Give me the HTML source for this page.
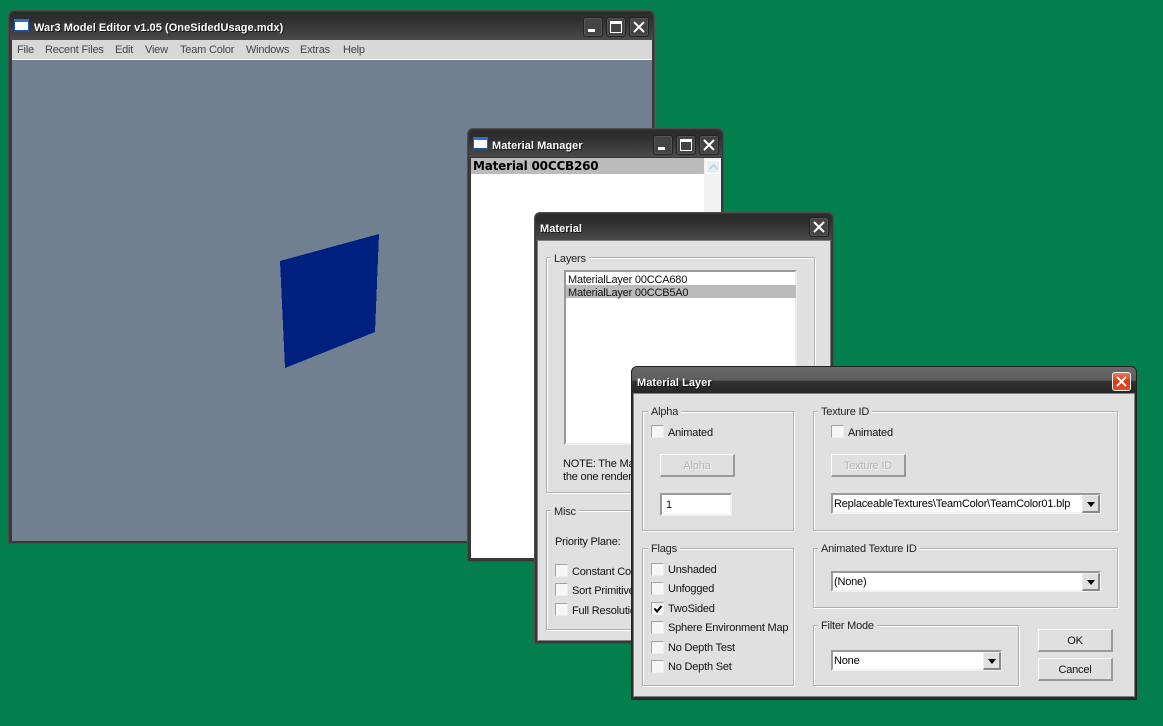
<!DOCTYPE html>
<html lang="en"><head><meta charset="utf-8"><title>War3 Model Editor</title>
<style>
html,body{margin:0;padding:0}
body{width:1163px;height:726px;background:#027f4c;overflow:hidden;position:relative;font-family:"Liberation Sans",sans-serif;font-size:11px;letter-spacing:-.2px;color:#111}
div,span,svg{position:absolute;box-sizing:border-box}
.t{white-space:nowrap;line-height:15px;height:15px}
.win{background:#383838;border:1px solid #4c4c4c;border-radius:6px 6px 0 0}
.tb{background:linear-gradient(#2a2a2a 0,#2e2e2e 25%,#4a4a4a 100%);border-radius:5px 5px 0 0}
.tl{color:#fff;font-weight:bold;font-size:11px;letter-spacing:.05px;white-space:nowrap;line-height:16px;text-shadow:1px 1px 0 #111}
.btn{width:20px;height:20px;background:#444;border:1px solid #222;border-radius:3px;box-shadow:inset 0 0 0 1px #555}
.client{background:#e0e0e0;box-shadow:0 0 0 1px #808080}
.grp{border:1px solid #b0b0b0;box-shadow:1px 1px 0 #fff,inset 1px 1px 0 #fff}
.lab{background:#e0e0e0;padding:0 3px;white-space:nowrap;line-height:15px;height:15px;color:#222}
.cb{width:13px;height:13px;background:#f6f6f6;border:1px solid #a4a4a4;border-right-color:#eee;border-bottom-color:#eee}
.b{background:#e0e0e0;border:1px solid #fff;border-right:2px solid #999;border-bottom:2px solid #999;text-align:center;line-height:22px;white-space:nowrap}
.dis{color:#b4b4b4;text-shadow:1px 1px 0 #f4f4f4}
.inp{background:#fff;border:2px solid #999;border-right-color:#f2f2f2;border-bottom-color:#f2f2f2;white-space:nowrap}
.dd{width:18px;background:#e0e0e0;border:1px solid #eee;border-right:2px solid #888;border-bottom:2px solid #888}
.dd:after{content:"";position:absolute;left:4px;top:6px;border-left:4.500px solid transparent;border-right:4.500px solid transparent;border-top:5px solid #000}
</style></head><body>

<!-- Main window -->
<div class="win" style="left:8px;top:10px;width:647px;height:534px"></div>
<div class="tb" style="left:10px;top:12px;width:643px;height:28px"></div>
<div style="left:14px;top:19px;width:15px;height:13px;background:#fff;border:1px solid #1d5fc0;border-top:3px solid #2a6fd8;border-bottom:2px solid #1b4f9f"></div>
<div class="tl" style="left:34px;top:20px">War3 Model Editor v1.05 (OneSidedUsage.mdx)</div>
<div class="btn" style="left:583px;top:17px"><span style="left:4px;top:11px;width:7px;height:3px;background:#fff"></span></div>
<div class="btn" style="left:606px;top:17px"><span style="left:3px;top:3px;width:12px;height:12px;border:1px solid #fff;border-top:3px solid #fff"></span></div>
<div class="btn" style="left:629px;top:17px"><svg style="left:3px;top:3px" width="12" height="12" viewBox="0 0 12 12"><path d="M1 1L11 11M11 1L1 11" stroke="#fff" stroke-width="2"/></svg></div>
<div style="left:12px;top:40px;width:640px;height:20px;background:#d8d8d8;border-bottom:1px solid #fff"></div>
<div class="t" style="left:17px;top:43px;color:#444">File</div>
<div class="t" style="left:45px;top:43px;color:#444">Recent Files</div>
<div class="t" style="left:115px;top:43px;color:#444">Edit</div>
<div class="t" style="left:145px;top:43px;color:#444">View</div>
<div class="t" style="left:180px;top:43px;color:#444">Team Color</div>
<div class="t" style="left:246px;top:43px;color:#444">Windows</div>
<div class="t" style="left:300px;top:43px;color:#444">Extras</div>
<div class="t" style="left:343px;top:43px;color:#444">Help</div>
<div style="left:12px;top:60px;width:640px;height:481px;background:#708090"></div>
<svg style="left:0;top:0" width="1163" height="726" shape-rendering="crispEdges"><polygon points="280,261 379,234 375,332 285,368" fill="#002080"/></svg>

<!-- Material Manager -->
<div class="win" style="left:467px;top:128px;width:257px;height:434px"></div>
<div class="tb" style="left:469px;top:130px;width:253px;height:27px"></div>
<div style="left:473px;top:137px;width:15px;height:13px;background:#fff;border:1px solid #1d5fc0;border-top:3px solid #2a6fd8;border-bottom:2px solid #1b4f9f"></div>
<div class="tl" style="left:492px;top:138px">Material Manager</div>
<div class="btn" style="left:653px;top:135px"><span style="left:4px;top:11px;width:7px;height:3px;background:#fff"></span></div>
<div class="btn" style="left:676px;top:135px"><span style="left:3px;top:3px;width:12px;height:12px;border:1px solid #fff;border-top:3px solid #fff"></span></div>
<div class="btn" style="left:699px;top:135px"><svg style="left:3px;top:3px" width="12" height="12" viewBox="0 0 12 12"><path d="M1 1L11 11M11 1L1 11" stroke="#fff" stroke-width="2"/></svg></div>
<div style="left:471px;top:158px;width:250px;height:400px;background:#fff"></div>
<div style="left:471px;top:158px;width:233px;height:16px;background:#bbb"></div>
<div class="t" style="left:473px;top:159px;font-family:'DejaVu Sans',sans-serif;font-weight:bold;font-size:12px;letter-spacing:-.2px;height:15px;line-height:15px;color:#000">Material 00CCB260</div>
<div style="left:704px;top:158px;width:17px;height:400px;background:#f2f2f2"></div>
<div style="left:706px;top:160px;width:14px;height:14px;background:#e8eef4;border:1px solid #fff"><svg style="left:2px;top:3px" width="9" height="6" viewBox="0 0 9 6"><path d="M0.5 5L4.5 1L8.500 5" stroke="#b8cfe4" stroke-width="1.600" fill="none"/></svg></div>

<!-- Material -->
<div class="win" style="left:534px;top:212px;width:300px;height:432px"></div>
<div class="tb" style="left:536px;top:214px;width:296px;height:27px"></div>
<div class="tl" style="left:540px;top:221px">Material</div>
<div class="btn" style="left:809px;top:217px"><svg style="left:3px;top:3px" width="12" height="12" viewBox="0 0 12 12"><path d="M1 1L11 11M11 1L1 11" stroke="#fff" stroke-width="2"/></svg></div>
<div class="client" style="left:538px;top:241px;width:292px;height:399px"></div>
<div class="grp" style="left:546px;top:257px;width:269px;height:236px"></div>
<div class="lab" style="left:551px;top:252px">Layers</div>
<div style="left:564px;top:270px;width:233px;height:175px;background:#fff;border:2px solid #999;border-right-color:#eee;border-bottom-color:#eee"></div>
<div class="t" style="left:568px;top:273px">MaterialLayer 00CCA680</div>
<div style="left:566px;top:285px;width:230px;height:13px;background:#bbb"></div>
<div class="t" style="left:568px;top:286px">MaterialLayer 00CCB5A0</div>
<div class="t" style="left:563px;top:457px">NOTE: The Material Layer at the bottom of the list is</div>
<div class="t" style="left:563px;top:470px">the one rendered on top of the others.</div>
<div class="grp" style="left:546px;top:510px;width:269px;height:120px"></div>
<div class="lab" style="left:551px;top:505px">Misc</div>
<div class="t" style="left:555px;top:535px">Priority Plane:</div>
<div class="cb" style="left:555px;top:564px"></div><div class="t" style="left:572px;top:565px">Constant Color</div>
<div class="cb" style="left:555px;top:583px"></div><div class="t" style="left:572px;top:584px">Sort Primitives</div>
<div class="cb" style="left:555px;top:603px"></div><div class="t" style="left:572px;top:604px">Full Resolution</div>

<!-- Material Layer -->
<div style="left:631px;top:366px;width:506px;height:334px;background:#2c2c2c;border:1px solid #222;border-radius:6px 6px 0 0"></div>
<div style="left:632px;top:367px;width:504px;height:27px;border-radius:5px 5px 0 0;background:linear-gradient(#6a6a6a 0,#5c5c5c 50%,#333 52%,#252525 100%)"></div>
<div class="tl" style="left:637px;top:375px">Material Layer</div>
<div style="left:1112px;top:372px;width:19px;height:19px;border-radius:3px;border:1px solid #eee;background:linear-gradient(#e87a60,#d93a16 50%,#e0502a)"><svg style="left:3px;top:3px" width="11" height="11" viewBox="0 0 11 11"><path d="M1 1L10 10M10 1L1 10" stroke="#fff" stroke-width="2"/></svg></div>
<div class="client" style="left:634px;top:394px;width:500px;height:302px"></div>

<div class="grp" style="left:642px;top:411px;width:152px;height:120px"></div>
<div class="lab" style="left:648px;top:405px">Alpha</div>
<div class="cb" style="left:651px;top:425px"></div><div class="t" style="left:668px;top:426px">Animated</div>
<div class="b dis" style="left:660px;top:454px;width:75px;height:23px">Alpha</div>
<div class="inp" style="left:660px;top:493px;width:72px;height:23px;padding:2px 4px;line-height:17px">1</div>

<div class="grp" style="left:813px;top:411px;width:305px;height:120px"></div>
<div class="lab" style="left:818px;top:405px">Texture ID</div>
<div class="cb" style="left:831px;top:425px"></div><div class="t" style="left:848px;top:426px">Animated</div>
<div class="b dis" style="left:831px;top:454px;width:75px;height:23px">Texture ID</div>
<div class="inp" style="left:831px;top:493px;width:270px;height:21px;padding:1px 1px;line-height:17px;overflow:hidden;color:#000">ReplaceableTextures\TeamColor\TeamColor01.blp</div>
<div class="dd" style="left:1082px;top:495px;height:18px"></div>

<div class="grp" style="left:642px;top:548px;width:152px;height:138px"></div>
<div class="lab" style="left:648px;top:542px">Flags</div>
<div class="cb" style="left:651px;top:563px"></div><div class="t" style="left:668px;top:563px">Unshaded</div>
<div class="cb" style="left:651px;top:582px"></div><div class="t" style="left:668px;top:582px">Unfogged</div>
<div class="cb" style="left:651px;top:602px"><svg style="left:1px;top:1px" width="10" height="10" viewBox="0 0 10 10"><path d="M1.500 4.500L4 7.500L8.500 2" stroke="#000" stroke-width="2" fill="none"/></svg></div><div class="t" style="left:668px;top:602px">TwoSided</div>
<div class="cb" style="left:651px;top:621px"></div><div class="t" style="left:668px;top:621px">Sphere Environment Map</div>
<div class="cb" style="left:651px;top:641px"></div><div class="t" style="left:668px;top:641px">No Depth Test</div>
<div class="cb" style="left:651px;top:660px"></div><div class="t" style="left:668px;top:660px">No Depth Set</div>

<div class="grp" style="left:813px;top:548px;width:305px;height:60px"></div>
<div class="lab" style="left:818px;top:542px">Animated Texture ID</div>
<div class="inp" style="left:831px;top:571px;width:270px;height:21px;padding:1px 1px;line-height:17px;color:#000">(None)</div>
<div class="dd" style="left:1082px;top:573px;height:18px"></div>

<div class="grp" style="left:813px;top:625px;width:206px;height:61px"></div>
<div class="lab" style="left:818px;top:619px">Filter Mode</div>
<div class="inp" style="left:831px;top:650px;width:171px;height:21px;padding:1px 1px;line-height:17px;color:#000">None</div>
<div class="dd" style="left:983px;top:652px;height:18px"></div>

<div class="b" style="left:1038px;top:629px;width:75px;height:23px">OK</div>
<div class="b" style="left:1038px;top:658px;width:75px;height:23px">Cancel</div>
</body></html>
